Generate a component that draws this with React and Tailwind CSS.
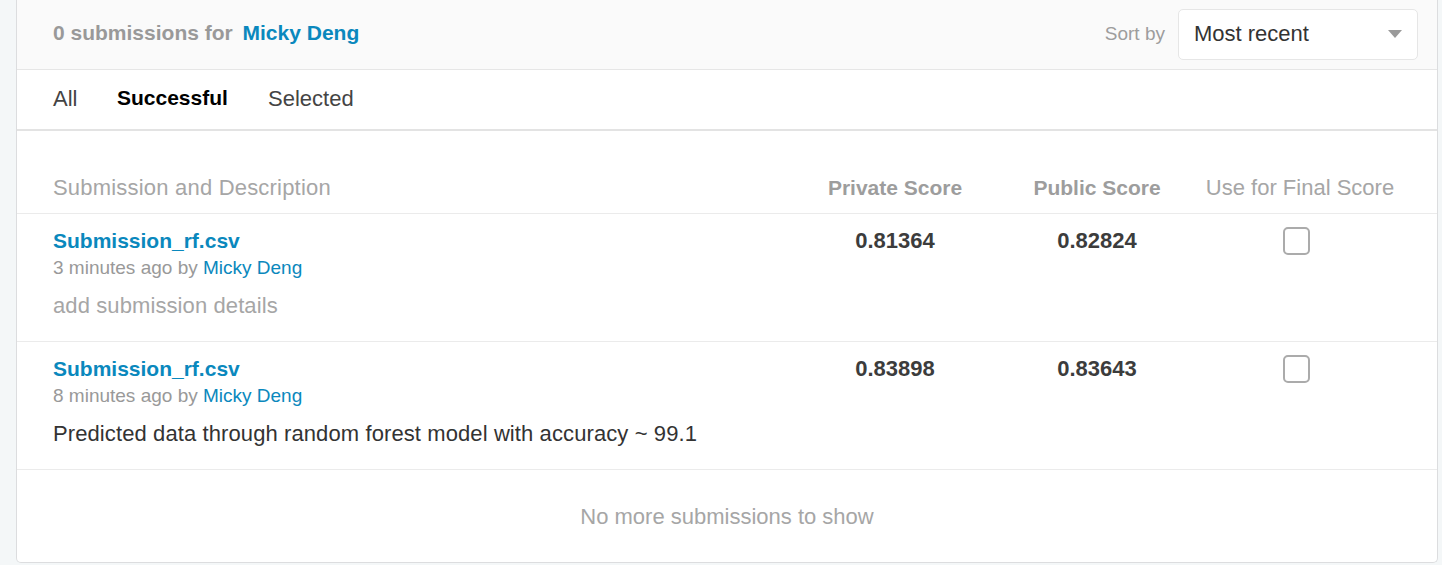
import React from "react";

const font = { fontFamily: '"Liberation Sans", Arial, sans-serif' };

function Row({ title, time, desc, descMuted, priv, pub }) {
  return (
    <div className="flex border-b border-[#ebebeb] px-[36px] pt-[15px] pb-[23px]">
      <div className="flex-1 min-w-0">
        <div className="text-[21px] leading-[24px] font-bold text-[#0a88bd]">{title}</div>
        <div className="mt-[5px] text-[19px] leading-[20px] text-[#999999]">
          {time} by <span className="text-[#0a88bd]">Micky Deng</span>
        </div>
        <div
          className={
            "mt-[16px] text-[22px] leading-[24px] tracking-[0.1px] " +
            (descMuted ? "text-[#a6a6a6]" : "text-[#333333]")
          }
        >
          {desc}
        </div>
      </div>
      <div className="w-[200px] text-center text-[22px] leading-[24px] font-bold text-[#3c3c3c]">{priv}</div>
      <div className="w-[204px] text-center text-[22px] leading-[24px] font-bold text-[#3c3c3c]">{pub}</div>
      <div className="w-[202px] flex justify-center">
        <div className="mr-[8px] -mt-[2px] h-[28px] w-[27px] rounded-[5px] border-2 border-[#ababab] bg-white" />
      </div>
    </div>
  );
}

export default function App() {
  return (
    <div className="min-h-[565px] bg-[#f4f7f8] pl-[16px] pr-[4px] pb-[2px]" style={font}>
      <div className="rounded-b-[5px] border border-t-0 border-[#dcdddf] bg-white">
        {/* Header */}
        <div className="flex h-[70px] items-center justify-between border-b border-[#e6e6e6] bg-[#fafafa] pl-[36px] pr-[19px]">
          <div className="mb-[3px] text-[21px] font-bold text-[#999999]">
            0 submissions for <span className="ml-[4px] text-[#0a88bd]">Micky Deng</span>
          </div>
          <div className="flex items-center gap-[13px]">
            <span className="mb-[1px] text-[19px] text-[#9d9d9d]">Sort by</span>
            <div className="mb-[1px] flex h-[51px] w-[240px] items-center justify-between rounded-[5px] border border-[#e6e6e6] bg-white pl-[15px] pr-[15px]">
              <span className="mb-[1px] text-[22px] text-[#333333]">Most recent</span>
              <svg width="14" height="8" viewBox="0 0 14 8">
                <path d="M0 0 L14 0 L7 8 Z" fill="#9a9a9a" />
              </svg>
            </div>
          </div>
        </div>
        {/* Tabs */}
        <div className="flex h-[61px] items-center border-b-2 border-[#e3e3e3] pb-[3px] pl-[36px]">
          <span className="w-[64px] text-[22px] text-[#444444]">All</span>
          <span className="w-[151px] text-[21px] font-bold text-black">Successful</span>
          <span className="text-[22px] text-[#444444]">Selected</span>
        </div>
        {/* Table header */}
        <div className="flex border-b border-[#ebebeb] px-[36px] pt-[45px] pb-[13px] leading-[24px]">
          <div className="flex-1 text-[22px] tracking-[0.2px] text-[#a6a6a6]">Submission and Description</div>
          <div className="w-[200px] text-center text-[21px] font-bold text-[#9d9d9d]">Private Score</div>
          <div className="w-[204px] text-center text-[21px] font-bold text-[#9d9d9d]">Public Score</div>
          <div className="w-[202px] text-center text-[22px] text-[#a6a6a6]">Use for Final Score</div>
        </div>
        <Row
          title="Submission_rf.csv"
          time="3 minutes ago"
          desc="add submission details"
          descMuted
          priv="0.81364"
          pub="0.82824"
        />
        <Row
          title="Submission_rf.csv"
          time="8 minutes ago"
          desc="Predicted data through random forest model with accuracy ~ 99.1"
          priv="0.83898"
          pub="0.83643"
        />
        <div className="flex h-[92px] items-center justify-center text-[22px] text-[#a6a6a6]">
          No more submissions to show
        </div>
      </div>
    </div>
  );
}
